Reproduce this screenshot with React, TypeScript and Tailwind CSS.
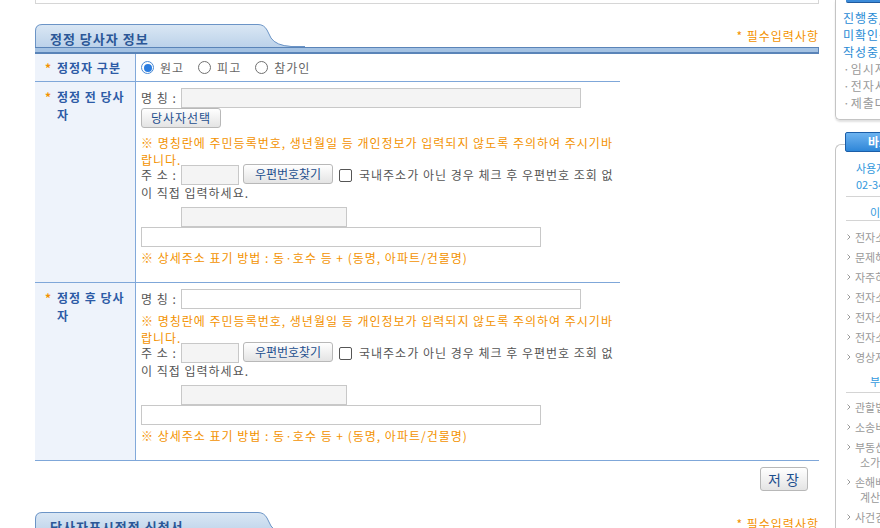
import React from 'react'

const orange = 'text-[#f39200]'
const inputBase = 'block h-[20px] border border-[#c8c8c8]'

function Btn({ children, className = '' }: { children: React.ReactNode; className?: string }) {
  return (
    <button
      type="button"
      className={`rounded-[3px] border border-[#b8b8b8] bg-linear-to-b from-white to-[#e4e4e4] text-[#1d4f8e] ${className}`}
    >
      {children}
    </button>
  )
}

function Radio({ checked, label }: { checked?: boolean; label: string }) {
  return (
    <span className="flex items-center">
      {checked ? (
        <span className="flex h-[13px] w-[13px] items-center justify-center rounded-full border border-[#4a8ad4] bg-white">
          <span className="h-[8px] w-[8px] rounded-full bg-[#2b7de0]" />
        </span>
      ) : (
        <span className="h-[13px] w-[13px] rounded-full border border-[#707070] bg-white" />
      )}
      <span className="ml-[6px] text-[#666]">{label}</span>
    </span>
  )
}

function SectionHeader({ title }: { title: string }) {
  return (
    <div>
      <div className="flex items-end justify-between">
        <div className="relative h-[23px] w-[270px]">
          <svg className="absolute inset-0" width="270" height="23" viewBox="0 0 270 23">
            <defs>
              <linearGradient id="tabg" x1="0" y1="0" x2="0" y2="1">
                <stop offset="0" stopColor="#dae7f4" />
                <stop offset="1" stopColor="#bcd2ea" />
              </linearGradient>
            </defs>
            <path d="M0,23 V7 Q0,0.5 7,0.5 H223 Q229,0.5 232,6 L236,14 Q241,21.5 256,22 H270 V23 Z" fill="url(#tabg)" />
            <path d="M0.5,23 V7 Q0.5,0.5 7,0.5 H223 Q229,0.5 232,6 L236,14 Q241,21.5 256,22.5 H270" fill="none" stroke="#6b94c6" />
          </svg>
          <span className="relative block pl-[15px] pt-[7px] text-[13px] leading-[16px] font-bold text-[#2b5797]">
            {title}
          </span>
        </div>
        <span className={`pb-[3px] leading-[16px] ${orange}`}>* 필수입력사항</span>
      </div>
      <div className="h-[7px] border-t border-r border-b-2 border-[#5a84b8] bg-[#a4c2e3]" />
    </div>
  )
}

function Label({ text, center }: { text: string; center?: boolean }) {
  return (
    <div
      className={`flex w-[101px] shrink-0 border-r border-[#82a9da] bg-[#eef3fb] pl-[10px] ${
        center ? 'items-center' : 'items-start pt-[6px]'
      }`}
    >
      <span className={`w-[12px] font-bold leading-[18px] ${orange}`}>*</span>
      <span className="w-[74px] font-bold leading-[18px] text-[#2d5ba6]">{text}</span>
    </div>
  )
}

function Party({ before }: { before?: boolean }) {
  return (
    <div className="flex-1 pt-[6px] pb-[16px] pl-[5px] pr-[4px]">
      <div className="flex h-[20px] items-center">
        <span className="w-[40px]">명 칭 :</span>
        <input className={`${inputBase} w-[400px] ${before ? 'bg-[#f4f4f4]' : 'bg-white'}`} />
      </div>
      {before && (
        <div className="flex h-[20px]">
          <Btn className="h-[20px] w-[80px]">당사자선택</Btn>
        </div>
      )}
      <p className={`${before ? 'mt-[6px]' : 'mt-[3px]'} leading-[17px] ${orange}`}>
        ※ 명칭란에 주민등록번호, 생년월일 등 개인정보가 입력되지 않도록 주의하여 주시기바
        <br />
        랍니다.
      </p>
      <div className="-mt-[3px] flex h-[20px] items-center">
        <span className="w-[40px]">주 소 :</span>
        <input className={`${inputBase} w-[58px] bg-[#f4f4f4]`} />
        <Btn className="ml-[4px] -mt-[3px] h-[20px] w-[90px] tracking-normal">우편번호찾기</Btn>
        <span className="ml-[6px] h-[13px] w-[13px] rounded-[2px] border border-[#555] bg-white" />
        <span className="ml-[7px]">국내주소가 아닌 경우 체크 후 우편번호 조회 없</span>
      </div>
      <div className="leading-[16px]">이 직접 입력하세요.</div>
      <input className={`${inputBase} mt-[6px] ml-[40px] w-[166px] bg-[#f4f4f4]`} />
      <input className={`${inputBase} w-[400px] bg-white`} />
      <p className={`mt-[3px] leading-[16px] ${orange}`}>※ 상세주소 표기 방법 : 동·호수 등 + (동명, 아파트/건물명)</p>
    </div>
  )
}

function Arrow() {
  return (
    <svg width="4" height="6" viewBox="0 0 4 6" className="mr-[4px] shrink-0">
      <path d="M0.5,0.5 L3,3 L0.5,5.5" fill="none" stroke="#999" />
    </svg>
  )
}

function SideItem({ lines }: { lines: string[] }) {
  return (
    <div className="flex items-start py-[2.5px] pl-[11px] leading-[15px] text-[#999]">
      <span className="flex h-[15px] items-center">
        <Arrow />
      </span>
      <div>
        {lines.map((l, i) => (
          <div key={i} className={i > 0 ? 'pl-[5px]' : ''}>
            {l}
          </div>
        ))}
      </div>
    </div>
  )
}

function Sidebar() {
  const guide = ['전자소송 안내', '문제해결 가이드', '자주하는 질문', '전자소송 절차', '전자소송 서식', '전자소송 용어', '영상자료실']
  return (
    <aside className="ml-[16px] w-[200px] shrink-0 text-[11px] tracking-normal">
      <div className="rounded-bl-[5px] border-b border-l border-[#c4c4c4] pb-[8px] shadow-[0_2px_2px_rgba(0,0,0,0.12)]">
        <div className="ml-[10px] h-[3px] rounded-b-[2px] border-b border-[#1f5a9e] bg-[#3b8bd9]" />
        <div className="pt-[6px] pl-[7px] text-[12px] leading-[17px] tracking-[1px]">
          <div className="text-[#2a8bd5]">진행중/완료사건</div>
          <div className="text-[#2a8bd5]">미확인송달문서</div>
          <div className="text-[#2a8bd5]">작성중/제출서류</div>
          <div className="text-[#999]">·임시저장서류</div>
          <div className="text-[#999]">·전자서명대기</div>
          <div className="text-[#999]">·제출대기서류</div>
        </div>
      </div>

      <div className="relative z-10 mt-[12px] ml-[10px] h-[20px] w-[150px] rounded-[2px] border border-[#1b5ea8] bg-linear-to-b from-[#6cb3f0] to-[#2d86d8] pl-[22px] text-[12px] leading-[18px] font-bold text-white">
        바로상담센터
      </div>
      <div className="-mt-[8px] rounded-tl-[6px] border-t border-l border-[#c4c4c4] pt-[15px]">
        <div className="pl-[20px] leading-[16px] text-[#3399dd]">
          <div>사용자지원센터</div>
          <div>02-3480-1715</div>
        </div>
        <div className="mt-[4px] ml-[10px] border-t border-[#d4d4d4]" />
        <div className="mt-[7px] pl-[34px] leading-[16px] text-[#3399dd]">이용안내</div>
        <div className="ml-[10px] border-t border-[#d4d4d4]" />
        <div className="mt-[6px]">
          {guide.map((g) => (
            <SideItem key={g} lines={[g]} />
          ))}
        </div>
        <div className="mt-[6px] pl-[34px] leading-[16px] text-[#3399dd]">부가서비스</div>
        <div className="mt-[3px] ml-[10px] border-t border-[#d4d4d4]" />
        <div className="mt-[4px] pb-[20px]">
          <SideItem lines={['관할법원 찾기']} />
          <SideItem lines={['소송비용 계산']} />
          <SideItem lines={['부동산 가액 및', '소가 계산기']} />
          <SideItem lines={['손해배상액', '계산기']} />
          <SideItem lines={['사건검색']} />
        </div>
      </div>
    </aside>
  )
}

export default function App() {
  return (
    <div className="flex w-[880px] overflow-hidden bg-white font-['Noto_Sans_CJK_KR','Noto_Sans',sans-serif] text-[12px] tracking-[1px] text-[#555]">
      <main className="ml-[35px] w-[784px] shrink-0">
        <div className="h-[4px] border-x border-b border-[#d6d6d6]" />

        <div className="mt-[20px]">
          <SectionHeader title="정정 당사자 정보" />
        </div>

        <div className="border-b border-[#7fa7d9]">
          <div className="w-[585px]">
            <div className="flex h-[28px] border-b border-[#7fa7d9]">
              <Label text="정정자 구분" center />
              <div className="flex items-center gap-[14px] pl-[5px]">
                <Radio checked label="원고" />
                <Radio label="피고" />
                <Radio label="참가인" />
              </div>
            </div>
            <div className="flex border-b border-[#7fa7d9]">
              <Label text="정정 전 당사자" />
              <Party before />
            </div>
            <div className="flex">
              <Label text="정정 후 당사자" />
              <Party />
            </div>
          </div>
        </div>

        <div className="flex justify-end pt-[6px] pr-[11px]">
          <Btn className="h-[24px] w-[48px] text-[14px] leading-[20px]">저 장</Btn>
        </div>

        <div className="mt-[21px]">
          <SectionHeader title="당사자표시정정 신청서" />
        </div>
        <div className="h-[120px] border-b border-[#7fa7d9]" />
      </main>
      <Sidebar />
    </div>
  )
}
